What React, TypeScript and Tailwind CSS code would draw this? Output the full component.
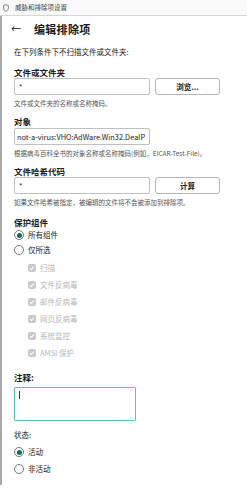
import React from "react";

const font = { fontFamily: '"Noto Sans CJK SC", "Noto Sans", sans-serif' };

const Radio = ({ checked, label }: { checked?: boolean; label: string }) => (
  <div className="flex items-center h-[14px] leading-[14px]">
    <span className="w-[10px] h-[10px] rounded-full border border-[#7a7a7a] flex items-center justify-center bg-white">
      {checked && <span className="w-[5px] h-[5px] rounded-full bg-[#06705c]" />}
    </span>
    <span className="ml-[4px] text-[7.5px] text-[#222]">{label}</span>
  </div>
);

const Check = ({ label }: { label: string }) => (
  <div className="flex items-center h-[17px] pl-[14px]">
    <span className="w-[8px] h-[8px] rounded-[2px] bg-[#c9c9c9] flex items-center justify-center">
      <svg width="6" height="6" viewBox="0 0 6 6">
        <path d="M1 3.1 L2.4 4.5 L5 1.5" stroke="#fff" strokeWidth="1.1" fill="none" />
      </svg>
    </span>
    <span className="ml-[4px] text-[7.5px] text-[#b8b8b8]">{label}</span>
  </div>
);

const Label = ({ children, className = "" }: { children: React.ReactNode; className?: string }) => (
  <div className={`h-[12px] leading-[12px] text-[8.5px] font-bold text-[#1b1b1b] ${className}`}>{children}</div>
);

const Help = ({ children }: { children: React.ReactNode }) => (
  <div className="mt-[3px] h-[10px] leading-[10px] text-[6.5px] text-[#555] whitespace-nowrap">{children}</div>
);

export default function App() {
  return (
    <div className="w-[247px] h-[500px] bg-white overflow-hidden" style={font}>
      {/* title bar */}
      <div className="h-[16px] bg-[#fafafa] border-b border-[#d6d6d6] flex items-center">
        <svg width="6" height="8" viewBox="0 0 6 8" className="ml-[3px]">
          <path d="M3 0.6 L5.4 1.6 V4 C5.4 5.6 4.2 6.8 3 7.4 C1.8 6.8 0.6 5.6 0.6 4 V1.6 Z" fill="none" stroke="#777" strokeWidth="0.9" />
        </svg>
        <span className="ml-[6px] text-[6.5px] text-[#444]">威胁和排除项设置</span>
      </div>

      <div className="h-[469px] border-l-2 border-[#a9a9a9] pl-[12px]">
        {/* header */}
        <div className="h-[26px] flex items-center">
          <span className="w-[10px] text-[10px] leading-none text-[#222] -ml-[3px]">←</span>
          <span className="ml-[13px] text-[11px] font-bold text-[#1a1a1a] tracking-[0.3px]">编辑排除项</span>
        </div>

        <div className="mt-[4px] h-[12px] leading-[12px] text-[7.5px] text-[#222]">在下列条件下不扫描文件或文件夹:</div>

        <Label className="mt-[8px]">文件或文件夹</Label>
        <div className="flex items-center gap-[5px]">
          <div className="w-[136px] h-[17px] border border-[#c0c0c0] rounded-[2px] flex items-center pl-[4px] text-[7.5px] text-[#222]">*</div>
          <button className="w-[65px] h-[17px] border border-[#b5b5b5] rounded-[3px] bg-white text-[7.5px] font-bold text-[#222]">浏览...</button>
        </div>
        <Help>文件或文件夹的名称或名称掩码。</Help>

        <Label className="mt-[7px]">对象</Label>
        <div className="mt-[1px] w-[136px] h-[17px] border border-[#c0c0c0] rounded-[2px] flex items-center pl-[2px] overflow-hidden whitespace-nowrap text-[7.4px] text-[#222]">
          not-a-virus:VHO:AdWare.Win32.DealP
        </div>
        <Help>根据病毒百科全书的对象名称或名称掩码(例如，EICAR-Test-File)。</Help>

        <Label className="mt-[7px]">文件哈希代码</Label>
        <div className="flex items-center gap-[5px]">
          <div className="w-[136px] h-[17px] border border-[#c0c0c0] rounded-[2px] flex items-center pl-[4px] text-[7.5px] text-[#222]">*</div>
          <button className="w-[65px] h-[17px] border border-[#b5b5b5] rounded-[3px] bg-white text-[7.5px] font-bold text-[#222]">计算</button>
        </div>
        <Help>如果文件哈希被指定，被编辑的文件将不会被添加到排除项。</Help>

        <Label className="mt-[9px]">保护组件</Label>
        <Radio checked label="所有组件" />
        <div className="mt-[1px]">
          <Radio label="仅所选" />
        </div>
        <div className="mt-[2px]">
          <Check label="扫描" />
          <Check label="文件反病毒" />
          <Check label="邮件反病毒" />
          <Check label="网页反病毒" />
          <Check label="系统监控" />
          <Check label="AMSI 保护" />
        </div>

        <Label className="mt-[10px]">注释:</Label>
        <div className="mt-[4px] w-[122px] h-[34px] border border-[#58c6ad] rounded-[1px] pl-[4px] pt-[3px]">
          <div className="w-[1px] h-[8px] bg-[#333]" />
        </div>

        <div className="mt-[8px] h-[12px] leading-[12px] text-[7.5px] text-[#222]">状态:</div>
        <div className="mt-[4px]">
          <Radio checked label="活动" />
        </div>
        <div className="mt-[3px]">
          <Radio label="非活动" />
        </div>
      </div>
    </div>
  );
}
